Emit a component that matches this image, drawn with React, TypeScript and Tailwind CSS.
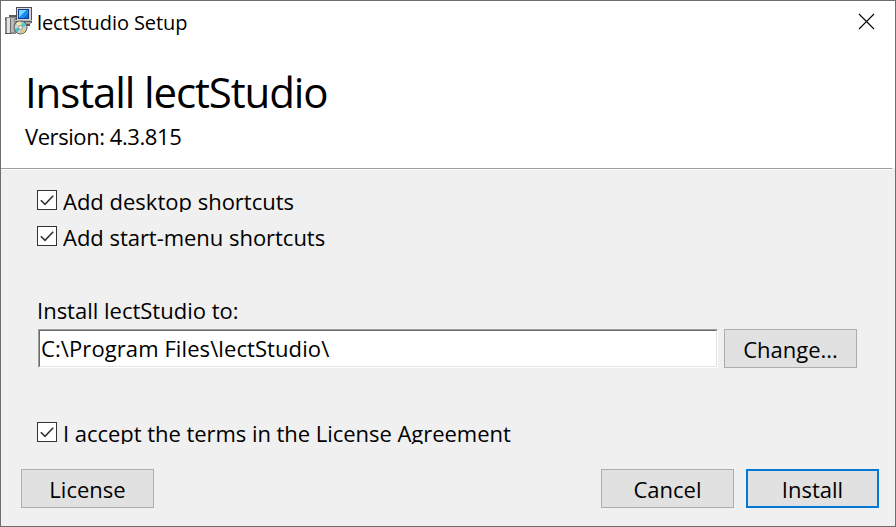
import React from "react";

function InstallerIcon() {
  return (
    <svg width="28" height="30" viewBox="0 0 28 30" shapeRendering="crispEdges" className="shrink-0">
      <rect x="0" y="11" width="11" height="17" fill="#8a8a8a" />
      <rect x="-1" y="12" width="2" height="2" fill="#555" />
      <rect x="2" y="12" width="3" height="16" fill="#e2e2e2" />
      <rect x="5" y="13" width="1" height="14" fill="#6a6a6a" />
      <rect x="6" y="12" width="3" height="14" fill="#b9b9b9" />
      <rect x="4" y="9" width="7" height="2" fill="#5a5a5a" />
      <rect x="0" y="27" width="6" height="1" fill="#555" />
      <rect x="11" y="1" width="16" height="15" fill="#4c5058" />
      <rect x="12" y="2" width="14" height="12" fill="#d4d4d0" />
      <rect x="13" y="3" width="11" height="10" fill="#123c91" />
      <rect x="14" y="4" width="9" height="8" fill="#168ff0" />
      <path d="M14 4h7l-7 7z" fill="#71d5ff" />
      <path d="M18 12l5-5v5z" fill="#1266d5" />
      <rect x="10" y="14" width="17" height="1" fill="#bdbdbd" />
      <rect x="11" y="15" width="16" height="2" fill="#555" />
      <rect x="20" y="16" width="6" height="2" fill="#a5a5a5" />
      <rect x="20" y="18" width="5" height="2" fill="#555" />
      <g shapeRendering="auto">
        <circle cx="15.5" cy="21.5" r="6.5" fill="#c9d0cd" stroke="#5c5c5c" />
        <path d="M15.5 21.5L11 17.3A6 6 0 0 1 15 15.5z" fill="#f1e9a0" />
        <path d="M15.5 21.5L18 16a6 6 0 0 1 3.3 3.7z" fill="#55c9bd" />
        <path d="M15.5 21.5L9.8 22.7A6 6 0 0 0 12 26.4z" fill="#45bfc4" />
        <path d="M15.5 21.5L16 27.4A6 6 0 0 0 20 25.4z" fill="#e3c861" />
        <circle cx="15.5" cy="21.5" r="1.9" fill="#fff" stroke="#777" strokeWidth=".8" />
      </g>
    </svg>
  );
}

function Check({ label, className, clip = "h-[30px]" }: { label: string; className: string; clip?: string }) {
  return (
    <label className="flex items-start">
      <span className="mt-[4px] h-5 w-5 shrink-0 border border-[#333] bg-white">
        <svg width="18" height="18" viewBox="0 0 18 18" fill="none">
          <path d="M2.8 9.2L7 13.3L15.2 4.8" stroke="#333" strokeWidth="1.6" />
        </svg>
      </span>
      <span className={`ml-[6px] overflow-hidden text-[22px] leading-[30px] ${clip} ${className}`}>{label}</span>
    </label>
  );
}

function Button({ label, primary = false }: { label: string; primary?: boolean }) {
  return (
    <button
      className={`flex h-[39px] w-[133px] shrink-0 items-center justify-center bg-[#e1e1e1] text-[22px] leading-[32px] ${
        primary ? "border-2 border-[#0078d7]" : "border border-[#adadad]"
      }`}
    >
      <span>{label}</span>
    </button>
  );
}

export default function App() {
  return (
    <div className="flex h-[527px] w-[896px] flex-col overflow-hidden whitespace-nowrap border border-[#6e6e6e] bg-[#f0f0f0] font-['Open_Sans',sans-serif] text-black">
      <header className="h-[167px] shrink-0 bg-white">
        <div className="flex h-[60px] items-start pl-[4px]">
          <div className="pt-[5px]"><InstallerIcon /></div>
          <span className="ml-[4px] pt-[7px] text-[20px] leading-[30px] tracking-[-0.08px]">lectStudio Setup</span>
          <svg width="17" height="17" viewBox="0 0 17 17" className="ml-auto mr-[20px] mt-[12px]">
            <path d="M1 1L16 16M16 1L1 16" stroke="#000" strokeWidth="1.1" />
          </svg>
        </div>
        <h1 className="pl-[24px] text-[42px] leading-[62px] tracking-[-1.12px]">Install lectStudio</h1>
        <p className="pl-[24px] text-[22px] leading-[27px] tracking-[-0.43px]">Version: 4.3.815</p>
      </header>
      <div className="mr-[2px] h-[2px] shrink-0 border-b border-r border-t border-b-white border-r-white border-t-[#a0a0a0]" />
      <main className="flex flex-1 flex-col">
        <div className="pl-[36px] pt-[16px]">
          <Check label="Add desktop shortcuts" clip="h-[26px]" className="tracking-[0px]" />
          <div className="h-[10px]" />
          <Check label="Add start-menu shortcuts" className="tracking-[-0.03px]" />
        </div>
        <div className="mt-[42px] pl-[36px] text-[22px] leading-[32px] tracking-[0px]">Install lectStudio to:</div>
        <div className="mt-[3px] flex gap-[6px] pl-[37px]">
          <div className="h-[39px] w-[680px] border border-b-white border-l-[#a0a0a0] border-r-white border-t-[#a0a0a0]">
            <div className="h-full border border-b-[#e3e3e3] border-l-[#696969] border-r-[#e3e3e3] border-t-[#696969] bg-white pl-[1px] text-[22px] leading-[34px] tracking-[0.09px]">
              C:\Program Files\lectStudio\
            </div>
          </div>
          <Button label="Change..." />
        </div>
        <div className="mt-[50px] pl-[36px]">
          <Check label="I accept the terms in the License Agreement" clip="h-[26px]" className="tracking-[-0.04px]" />
        </div>
        <footer className="mt-[25px] flex pl-[20px] pr-[16px]">
          <Button label="License" />
          <div className="ml-auto flex gap-[12px]">
            <Button label="Cancel" />
            <Button label="Install" primary />
          </div>
        </footer>
      </main>
    </div>
  );
}
